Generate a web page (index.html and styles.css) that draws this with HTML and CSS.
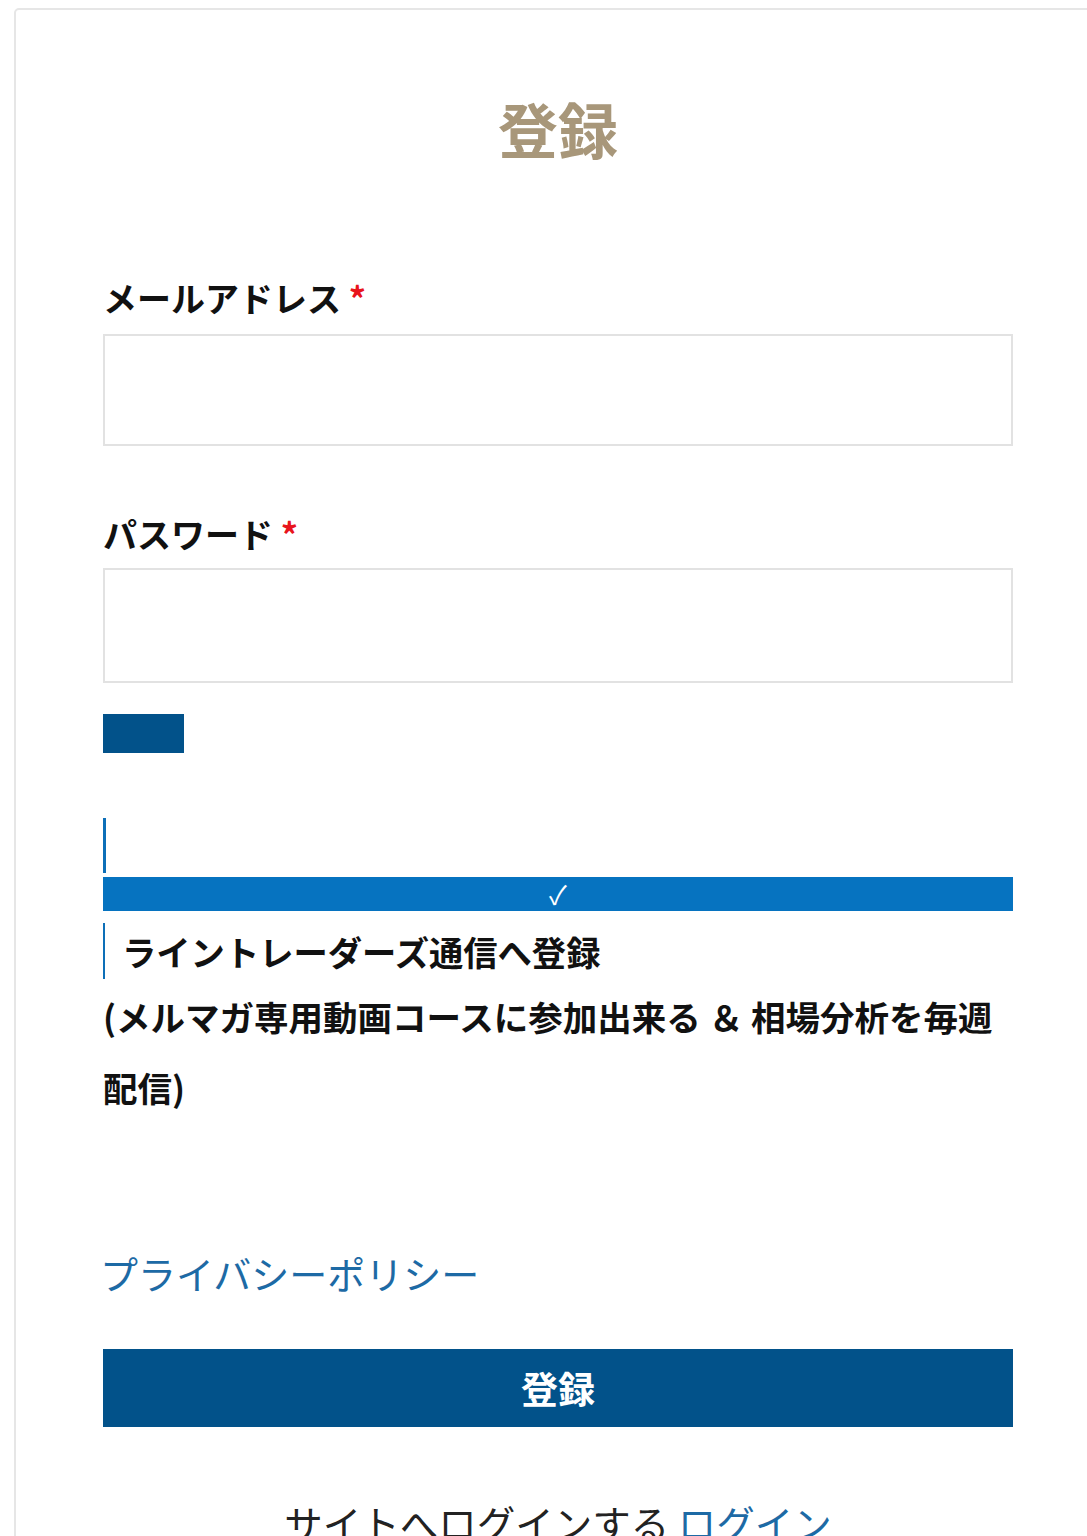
FILE: index.html
```html
<!DOCTYPE html>
<html lang="ja">
<head>
  <meta charset="UTF-8" />
  <meta name="viewport" content="width=device-width, initial-scale=1.0"/>
  <title>登録</title>
  <link rel="stylesheet" href="styles.css">
</head>
<body>

  <div class="tarjeta">
    <h1 class="titulo">登録</h1>

    <form class="registro">
      <label class="etiqueta" for="email">メールアドレス <span class="req">*</span></label>
      <input class="campo" type="email" id="email">

      <label class="etiqueta etiqueta-pass" for="pass">パスワード <span class="req">*</span></label>
      <input class="campo campo-pass" type="password" id="pass">

      <div class="medidor"></div>

      <div class="boletin">
        <div class="linea linea-alta"></div>
        <div class="barra-check">✓</div>
        <div class="boletin-titulo">
          <div class="linea"></div>
          <span>ライントレーダーズ通信へ登録</span>
        </div>
        <p class="boletin-desc">(メルマガ専用動画コースに参加出来る ＆ 相場分析を毎週配信)</p>
      </div>

      <a class="privacidad" href="#">プライバシーポリシー</a>

      <button class="enviar" type="button">登録</button>

      <p class="login">サイトへログインする <a href="#">ログイン</a></p>
    </form>
  </div>

</body>
</html>
```

FILE: styles.css
```css
/* --------- Base --------- */
html { overflow:hidden }
body {
  margin:0; padding:8px 0 0 14px;
  font-family:"Noto Sans CJK JP", "Noto Sans", sans-serif;
  color:#111; background:#fff
}
.tarjeta {
  width:1100px; box-sizing:border-box;
  border:2px solid #e6e6e6; border-radius:5px;
  padding:0 99px 40px 87px; min-height:1600px
}
.titulo {
  margin:63px 0 0; text-align:center;
  font-size:60px; line-height:110px; font-weight:700; color:#a8977a
}

/* --------- Formulario --------- */
.registro { display:flex; flex-direction:column; align-items:flex-start }
.etiqueta { margin-top:90px; font-size:34px; line-height:50px; font-weight:700 }
.etiqueta-pass { margin-top:63px }
.req { color:#e8141c }
.campo {
  width:100%; box-sizing:border-box; height:112px; margin-top:11px;
  border:2px solid #e2e2e2; background:#fff
}
.campo-pass { height:115px; margin-top:9px }
.medidor { width:81px; height:39px; margin-top:31px; background:#02528a }

/* Boletín */
.boletin { width:100%; margin-top:65px }
.linea { width:3px; height:56px; background:#0d6fb8 }
.linea-alta { height:55px }
.barra-check {
  margin-top:4px; height:34px; background:#0673c0;
  color:#fff; text-align:center; font-size:26px; line-height:34px
}
.boletin-titulo { display:flex; align-items:center; gap:17px; margin-top:12px }
.boletin-titulo .linea { width:2px }
.boletin-titulo span { font-size:34.3px; line-height:40px; font-weight:700 }
.boletin-desc { margin:2px 0 0; font-size:34.5px; line-height:71px; font-weight:700 }

.privacidad {
  margin-top:125px; margin-left:-3px;
  font-size:38px; line-height:50px; color:#1d6aa5; text-decoration:none
}
.enviar {
  width:100%; height:78px; margin-top:51px;
  border:none; background:#02528a; color:#fff;
  font-family:inherit; font-size:37px; font-weight:700; cursor:pointer
}
.login { align-self:center; margin:70px 0 0; font-size:38.5px; line-height:50px; color:#222 }
.login a { color:#1d6aa5; text-decoration:none }
```
